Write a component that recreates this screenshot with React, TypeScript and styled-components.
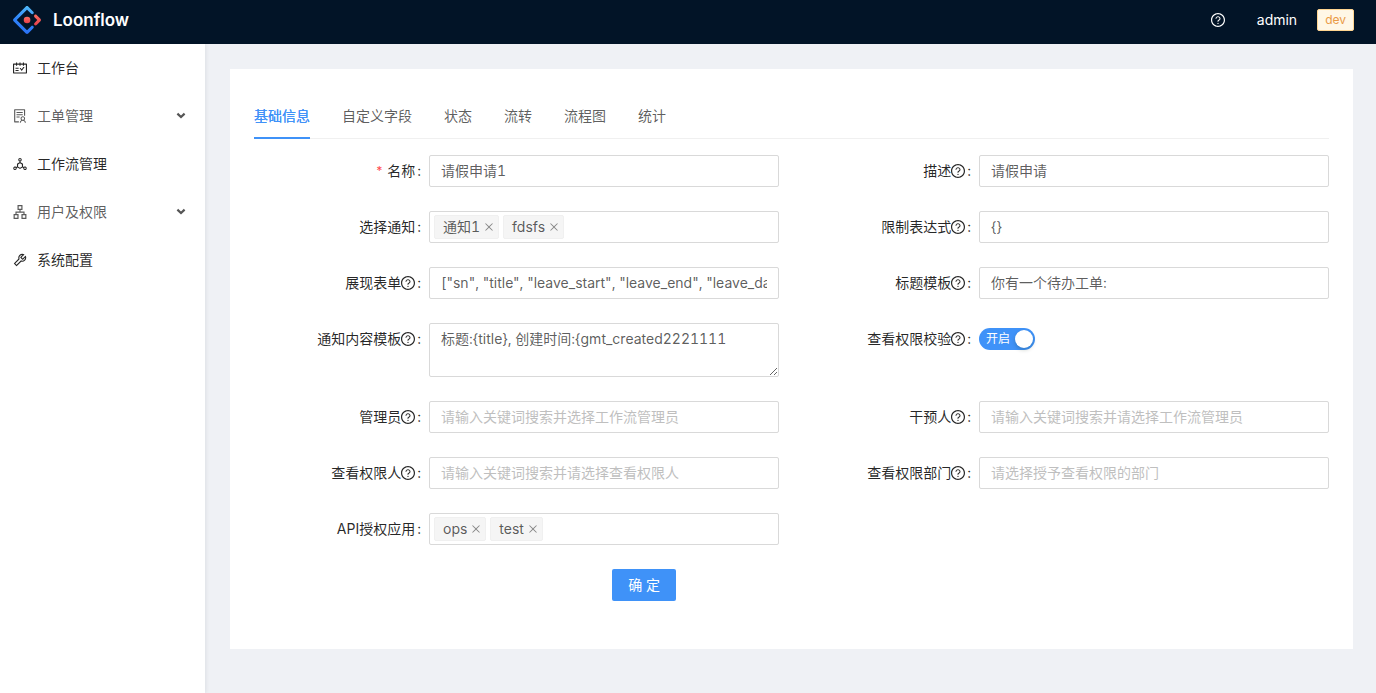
import React, { useState } from 'react';
import styled, { createGlobalStyle } from 'styled-components';
import {
  AiOutlineApartment,
  AiOutlineClose,
  AiOutlineDeploymentUnit,
  AiOutlineQuestionCircle,
  AiOutlineSchedule,
  AiOutlineSolution,
  AiOutlineTool,
} from 'react-icons/ai';

const color = {
  primary: '#3f92f8',
  header: '#021427',
  page: '#eff1f5',
  heading: 'rgba(0, 0, 0, 0.85)',
  text: 'rgba(0, 0, 0, 0.65)',
  placeholder: '#bfbfbf',
  border: '#d9d9d9',
};

// Trims the empty margin that the icon set leaves around each glyph.
const iconBox = '64 64 896 896';

const GlobalStyle = createGlobalStyle`
  *, *::before, *::after { box-sizing: border-box; }
  body {
    margin: 0;
    background: ${color.page};
    color: ${color.text};
    font-family: Inter, "Noto Sans CJK SC", sans-serif;
    font-size: 14px;
    font-variant-numeric: tabular-nums;
    line-height: 22px;
  }
  button, input, textarea {
    font: inherit;
    font-variant-numeric: inherit;
    color: inherit;
  }
  svg { display: block; flex: none; }
`;

const Page = styled.div`
  display: flex;
  flex-direction: column;
  min-height: 100vh;
`;

const Header = styled.header`
  display: flex;
  align-items: center;
  justify-content: space-between;
  height: 44px;
  padding: 0 22px 4px 13px;
  background: ${color.header};
  color: #fff;
`;

const Brand = styled.a`
  display: flex;
  align-items: center;
  gap: 12px;
  color: #fff;
  font-size: 17px;
  font-weight: 600;
  text-decoration: none;
`;

const HeaderActions = styled.div`
  display: flex;
  align-items: center;
`;

const HelpButton = styled.button`
  margin-right: 32px;
  padding: 0;
  border: 0;
  background: none;
`;

const UserName = styled.span`
  margin-right: 20px;
`;

const EnvTag = styled.span`
  padding: 0 7px;
  border: 1px solid #ffd591;
  border-radius: 2px;
  background: #fff7e6;
  color: #ea9a45;
  font-size: 12px;
  line-height: 20px;
`;

const Body = styled.div`
  display: flex;
  flex: 1;
`;

const Sidebar = styled.nav`
  flex: 0 0 205px;
  background: #fff;
  box-shadow: 1px 0 4px rgba(0, 21, 41, 0.08);
`;

const Menu = styled.ul`
  margin: 0;
  padding: 0;
  list-style: none;
`;

const MenuItem = styled.a<{ $group?: boolean }>`
  display: flex;
  align-items: center;
  gap: 10px;
  height: 48px;
  padding: 0 19px 0 13px;
  color: ${(p) => (p.$group ? color.text : color.heading)};
  text-decoration: none;
`;

const MenuText = styled.span`
  flex: 1;
`;

const Main = styled.main`
  flex: 1;
  min-width: 0;
  padding: 25px 23px 24px 25px;
`;

const Card = styled.section`
  padding: 24px;
  background: #fff;
`;

const TabList = styled.div`
  display: flex;
  gap: 32px;
  margin-bottom: 16px;
  box-shadow: inset 0 -1px #f0f0f0;
`;

const Tab = styled.button<{ $active: boolean }>`
  height: 46px;
  padding: 2px 0 0;
  border: 0;
  border-bottom: 2px solid ${(p) => (p.$active ? color.primary : 'transparent')};
  background: none;
  color: ${(p) => (p.$active ? color.primary : color.text)};
  text-shadow: ${(p) => (p.$active ? '0 0 0 currentColor' : 'none')};
  cursor: pointer;
`;

const Form = styled.form`
  display: grid;
  grid-template-columns: repeat(2, minmax(0, 1fr));
  gap: 24px 25px;
  padding-bottom: 24px;
`;

const FormItem = styled.div`
  display: flex;
  align-items: flex-start;
`;

const Label = styled.label<{ $required?: boolean }>`
  display: flex;
  flex: 0 0 33.333%;
  align-items: center;
  justify-content: flex-end;
  height: 32px;
  color: ${color.heading};
  white-space: nowrap;

  &::before {
    content: ${(p) => (p.$required ? "'*'" : 'none')};
    margin-right: 4px;
    color: #ff4d4f;
    font-size: 12px;
  }
  &::after {
    content: ':';
    margin: 0 8px 0 2px;
  }
`;

const Control = styled.div`
  display: flex;
  flex: 1;
  align-items: center;
  min-width: 0;
  min-height: 32px;
`;

const TextInput = styled.input`
  width: 100%;
  height: 32px;
  padding: 0 11px 2px;
  border: 1px solid ${color.border};
  border-radius: 2px;
  background: #fff;
  outline: 0;

  &::placeholder { color: ${color.placeholder}; }
  &:focus { border-color: ${color.primary}; }
`;

const TextArea = styled.textarea`
  display: block;
  width: 100%;
  height: 54px;
  padding: 4px 11px;
  border: 1px solid ${color.border};
  border-radius: 2px;
  outline: 0;
  resize: vertical;
`;

const TagBox = styled.div`
  display: flex;
  gap: 4px;
  width: 100%;
  height: 32px;
  padding: 3px 4px;
  border: 1px solid ${color.border};
  border-radius: 2px;
`;

const Tag = styled.span`
  display: flex;
  align-items: center;
  gap: 4px;
  height: 24px;
  padding: 0 4px 0 8px;
  border: 1px solid #f0f0f0;
  border-radius: 2px;
  background: #f5f5f5;
`;

const TagRemove = styled.button`
  padding: 0;
  border: 0;
  background: none;
  color: rgba(0, 0, 0, 0.45);
  cursor: pointer;
`;

const TagInput = styled.input`
  flex: 1;
  min-width: 0;
  border: 0;
  outline: 0;
`;

const Switch = styled.span`
  display: grid;
  width: 56px;
  height: 22px;
`;

const SwitchInput = styled.input`
  grid-area: 1 / 1;
  width: 56px;
  height: 22px;
  margin: 0;
  border-radius: 11px;
  background: rgba(0, 0, 0, 0.25);
  appearance: none;
  cursor: pointer;

  &::before {
    content: '';
    display: block;
    width: 18px;
    height: 18px;
    margin: 2px;
    border-radius: 50%;
    background: #fff;
    box-shadow: 0 2px 4px rgba(0, 35, 11, 0.2);
  }
  &:checked { background: ${color.primary}; }
  &:checked::before { margin-left: 36px; }
`;

const SwitchText = styled.span<{ $on: boolean }>`
  grid-area: 1 / 1;
  justify-self: ${(p) => (p.$on ? 'start' : 'end')};
  padding: 0 7px;
  color: #fff;
  font-size: 12px;
  pointer-events: none;
`;

const Actions = styled.div`
  grid-column: 1 / -1;
  padding-left: 33.333%;
`;

const SubmitButton = styled.button`
  height: 32px;
  padding: 0 16px;
  border: 0;
  border-radius: 2px;
  background: ${color.primary};
  color: #fff;
  cursor: pointer;
`;

const Logo = () => (
  <svg width="28" height="28" viewBox="0 0 200 200" aria-hidden="true">
    <defs>
      <linearGradient id="logoBlue" x1="0.6" y1="0" x2="0.4" y2="1">
        <stop offset="0" stopColor="#4fb8f8" />
        <stop offset="0.5" stopColor="#2f86fb" />
        <stop offset="1" stopColor="#2a6ff5" />
      </linearGradient>
      <linearGradient id="logoRed" x1="0.5" y1="0" x2="0.5" y2="1">
        <stop offset="0" stopColor="#fa6e5f" />
        <stop offset="1" stopColor="#e63e4b" />
      </linearGradient>
    </defs>
    <path
      fill="url(#logoBlue)"
      d="M91.6 4.2 4.2 91.5c-4.7 4.7-4.7 12.3 0 17l87.4 87.3c4.7 4.7 12.3 4.7 17 0l36.6-36.6c4.2-4.2 4.2-11 0-15.2s-11-4.2-15.2 0l-27.8 27.7c-1.2 1.2-2.9 1.2-4.1 0L28.3 102c-1.2-1.2-1.2-2.9 0-4.1l69.8-69.8c1.2-1.2 2.9-1.2 4.1 0L130 55.9c4.2 4.2 11 4.2 15.2 0s4.2-11 0-15.2L108.6 4.1c-4.7-4.6-12.3-4.6-17 .1Z"
    />
    <path
      fill="url(#logoRed)"
      d="M153.7 135.9c4.2 4.2 11 4.2 15.2 0l27.1-27c4.7-4.7 4.7-12.3 0-17l-27.3-27.2c-4.2-4.2-11-4.2-15.3 0-4.2 4.2-4.2 11 0 15.3l18.5 18.4c1.2 1.2 1.2 2.9 0 4.1l-18.2 18.2c-4.2 4.2-4.2 11 0 15.2Z"
    />
    <circle cx="100.5" cy="100.4" r="23.6" fill="url(#logoRed)" />
  </svg>
);

const Chevron = () => (
  <svg width="10" height="8" viewBox="0 0 10 8" fill="none" aria-hidden="true">
    <path d="M1.4 1.6 5 5l3.6-3.4" stroke="#555" strokeWidth="2.2" />
  </svg>
);

const menu = [
  { text: '工作台', Icon: AiOutlineSchedule },
  { text: '工单管理', Icon: AiOutlineSolution, group: true },
  { text: '工作流管理', Icon: AiOutlineDeploymentUnit },
  { text: '用户及权限', Icon: AiOutlineApartment, group: true },
  { text: '系统配置', Icon: AiOutlineTool },
];

const tabs = ['基础信息', '自定义字段', '状态', '流转', '流程图', '统计'];

type FieldProps = {
  id: string;
  label: string;
  help?: boolean;
  required?: boolean;
  children: React.ReactNode;
};

const Field = ({ id, label, help, required, children }: FieldProps) => (
  <FormItem>
    <Label htmlFor={id} $required={required}>
      {label}
      {help && <AiOutlineQuestionCircle size={14} viewBox={iconBox} />}
    </Label>
    <Control>{children}</Control>
  </FormItem>
);

const TagSelect = ({ id, initial }: { id: string; initial: string[] }) => {
  const [tags, setTags] = useState(initial);
  return (
    <TagBox>
      {tags.map((tag) => (
        <Tag key={tag}>
          {tag}
          <TagRemove
            type="button"
            aria-label={`移除 ${tag}`}
            onClick={() => setTags(tags.filter((t) => t !== tag))}
          >
            <AiOutlineClose size={10} viewBox={iconBox} />
          </TagRemove>
        </Tag>
      ))}
      <TagInput id={id} />
    </TagBox>
  );
};

export default function App() {
  const [activeTab, setActiveTab] = useState(tabs[0]);
  const [checkView, setCheckView] = useState(true);

  return (
    <Page>
      <GlobalStyle />
      <Header>
        <Brand href="#">
          <Logo />
          Loonflow
        </Brand>
        <HeaderActions>
          <HelpButton type="button" aria-label="帮助">
            <AiOutlineQuestionCircle size={14} viewBox={iconBox} />
          </HelpButton>
          <UserName>admin</UserName>
          <EnvTag>dev</EnvTag>
        </HeaderActions>
      </Header>
      <Body>
        <Sidebar>
          <Menu>
            {menu.map(({ text, Icon, group }) => (
              <li key={text}>
                <MenuItem href="#" $group={group}>
                  <Icon size={14} viewBox={iconBox} />
                  <MenuText>{text}</MenuText>
                  {group && <Chevron />}
                </MenuItem>
              </li>
            ))}
          </Menu>
        </Sidebar>
        <Main>
          <Card>
            <TabList role="tablist">
              {tabs.map((tab) => (
                <Tab
                  key={tab}
                  type="button"
                  role="tab"
                  aria-selected={tab === activeTab}
                  $active={tab === activeTab}
                  onClick={() => setActiveTab(tab)}
                >
                  {tab}
                </Tab>
              ))}
            </TabList>
            <Form onSubmit={(e) => e.preventDefault()}>
              <Field id="name" label="名称" required>
                <TextInput id="name" defaultValue="请假申请1" />
              </Field>
              <Field id="description" label="描述" help>
                <TextInput id="description" defaultValue="请假申请" />
              </Field>
              <Field id="notices" label="选择通知">
                <TagSelect id="notices" initial={['通知1', 'fdsfs']} />
              </Field>
              <Field id="limit" label="限制表达式" help>
                <TextInput id="limit" defaultValue="{}" />
              </Field>
              <Field id="display" label="展现表单" help>
                <TextInput
                  id="display"
                  defaultValue={'["sn", "title", "leave_start", "leave_end", "leave_days"]'}
                />
              </Field>
              <Field id="titleTemplate" label="标题模板" help>
                <TextInput id="titleTemplate" defaultValue="你有一个待办工单:" />
              </Field>
              <Field id="contentTemplate" label="通知内容模板" help>
                <TextArea
                  id="contentTemplate"
                  defaultValue="标题:{title}, 创建时间:{gmt_created2221111"
                />
              </Field>
              <Field id="viewCheck" label="查看权限校验" help>
                <Switch>
                  <SwitchInput
                    id="viewCheck"
                    type="checkbox"
                    role="switch"
                    checked={checkView}
                    onChange={(e) => setCheckView(e.target.checked)}
                  />
                  <SwitchText $on={checkView}>{checkView ? '开启' : '关闭'}</SwitchText>
                </Switch>
              </Field>
              <Field id="admins" label="管理员" help>
                <TextInput id="admins" placeholder="请输入关键词搜索并选择工作流管理员" />
              </Field>
              <Field id="interveners" label="干预人" help>
                <TextInput id="interveners" placeholder="请输入关键词搜索并请选择工作流管理员" />
              </Field>
              <Field id="viewers" label="查看权限人" help>
                <TextInput id="viewers" placeholder="请输入关键词搜索并请选择查看权限人" />
              </Field>
              <Field id="viewDepts" label="查看权限部门" help>
                <TextInput id="viewDepts" placeholder="请选择授予查看权限的部门" />
              </Field>
              <Field id="apps" label="API授权应用">
                <TagSelect id="apps" initial={['ops', 'test']} />
              </Field>
              <Actions>
                <SubmitButton type="submit">确 定</SubmitButton>
              </Actions>
            </Form>
          </Card>
        </Main>
      </Body>
    </Page>
  );
}
